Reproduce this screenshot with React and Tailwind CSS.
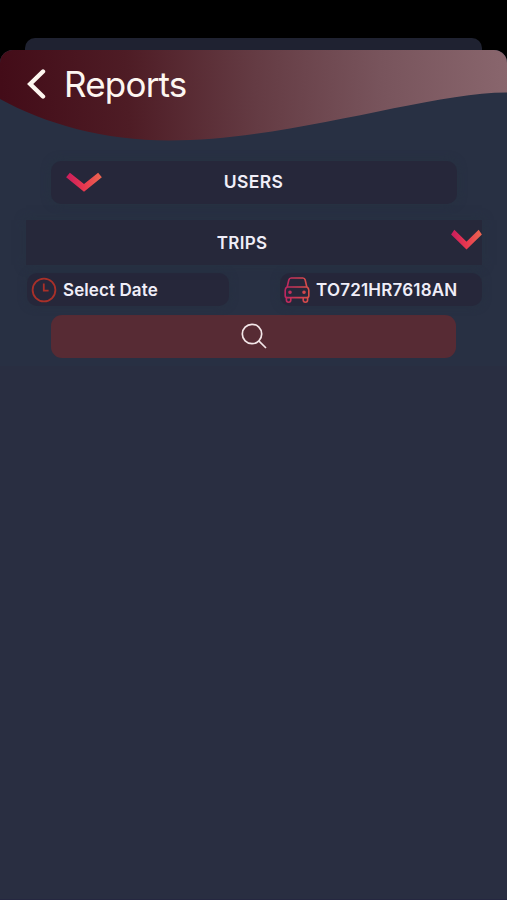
import React from 'react';

function ChevronDown({ id, width, height, className }) {
  return (
    <svg width={width} height={height} viewBox="0 0 36 20" preserveAspectRatio="none" fill="none" className={className}>
      <defs>
        <linearGradient id={id} x1="0" y1="0" x2="1" y2="0">
          <stop offset="0" stopColor="#cb1f5c" />
          <stop offset="0.5" stopColor="#e8384f" />
          <stop offset="1" stopColor="#ea6450" />
        </linearGradient>
      </defs>
      <path d="M2 3 L18 15.8 L34 3" stroke={`url(#${id})`} strokeWidth="6" />
    </svg>
  );
}

function ClockIcon() {
  return (
    <svg width="26" height="26" viewBox="0 0 26 26" fill="none" stroke="#a93029" strokeWidth="1.8" className="relative -top-px">
      <circle cx="13" cy="13" r="11.4" />
      <path d="M12.8 6.5 V13.6 H17.6" />
    </svg>
  );
}

function CarIcon() {
  return (
    <svg width="26" height="26" viewBox="0 0 26 26" fill="none" stroke="url(#car)" strokeWidth="1.6" strokeLinejoin="round" className="relative -top-px">
      <defs>
        <linearGradient id="car" gradientUnits="userSpaceOnUse" x1="1" y1="0" x2="25" y2="0">
          <stop offset="0" stopColor="#bd2560" />
          <stop offset="1" stopColor="#d95048" />
        </linearGradient>
      </defs>
      <path d="M3.2 10 L4.8 3 Q5.3 1 7.2 1 H18.8 Q20.7 1 21.2 3 L22.8 10" />
      <path d="M3.2 10 H22.8 Q24.8 11 24.8 13.2 V18.8 Q24.8 20.6 23 20.6 H3 Q1.2 20.6 1.2 18.8 V13.2 Q1.2 11 3.2 10 Z" />
      <path d="M2.4 20.6 V23 Q2.4 25.2 4.6 25.2 Q6.8 25.2 6.8 23 V20.6" />
      <path d="M19.2 20.6 V23 Q19.2 25.2 21.4 25.2 Q23.6 25.2 23.6 23 V20.6" />
      <circle cx="6" cy="15.2" r="1" fill="#c93454" />
      <circle cx="20" cy="15.2" r="1" fill="#d94a4a" />
    </svg>
  );
}

function Header() {
  return (
    <header className="relative h-[92px]">
      <svg className="absolute inset-0" width="507" height="92" viewBox="0 0 507 92">
        <defs>
          <linearGradient id="wave" gradientUnits="userSpaceOnUse" x1="0" y1="20" x2="507" y2="0">
            <stop offset="0" stopColor="#430c18" />
            <stop offset="0.25" stopColor="#4e1c25" />
            <stop offset="0.5" stopColor="#643b43" />
            <stop offset="0.75" stopColor="#78545c" />
            <stop offset="1" stopColor="#89666d" />
          </linearGradient>
        </defs>
        <path d="M0 0 H507 V42.5 C430 42 290 90.5 169 90.5 C105 90.5 45 74 0 49 Z" fill="url(#wave)" />
      </svg>
      <div className="relative flex items-center pt-[11px] pl-[27px]">
        <svg width="19" height="32" viewBox="0 0 19 32" fill="none" stroke="#fdf6ef" strokeWidth="4.4">
          <path d="M16 3.5 L3.2 16 L16 28.5" strokeLinecap="round" strokeLinejoin="miter" />
        </svg>
        <h1 className="mt-px ml-[18px] text-[35px] leading-[44px] tracking-[-0.8px] text-[#fdf6f0]">Reports</h1>
      </div>
    </header>
  );
}

export default function App() {
  return (
    <div className="flex h-[900px] w-[507px] flex-col overflow-hidden bg-black pt-[38px] font-['Inter',sans-serif] text-[17px] font-semibold text-[#f0eef8]">
      <div className="mx-[25px] h-3 shrink-0 rounded-t-[10px] bg-[#1f2231]" />
      <main className="flex-1 overflow-hidden rounded-t-[13px] border-b border-[#252740] bg-[#292e41]">
        <div className="h-[316px] bg-[#283043]">
          <div className="font-normal">
            <Header />
          </div>
          <button className="relative mx-auto mt-[19px] flex h-[43px] w-[406px] items-center justify-center rounded-[10px] bg-[#26273a] text-[17.5px] tracking-[0.4px] shadow-[0_0_10px_#263241]">
            <ChevronDown id="users" width={36} height={20} className="absolute top-[11px] left-[15px]" />
            USERS
          </button>
          <button className="relative mx-[26px] mt-4 flex h-[45px] w-[456px] items-center justify-center bg-[#26283a] pt-0.5 pr-6 tracking-[0.3px] shadow-[0_0_10px_#263241]">
            <ChevronDown id="trips" width={31} height={21} className="absolute top-[9px] right-0" />
            TRIPS
          </button>
          <div className="mt-[8px] flex justify-between pr-[25px] pl-[27px]">
            <button className="flex h-[33px] w-[202px] items-center gap-1.5 rounded-[10px] bg-[#26273a] pt-0.5 pl-1 tracking-[0.1px] shadow-[0_0_8px_#263040]">
              <ClockIcon />
              Select Date
            </button>
            <button className="flex h-[33px] w-[202px] items-center gap-1.5 rounded-[10px] bg-[#26273a] pt-0.5 pl-1 tracking-[0.2px] shadow-[0_0_8px_#263040]">
              <CarIcon />
              TO721HR7618AN
            </button>
          </div>
          <button className="mx-auto mt-[9px] flex h-[43px] w-[405px] items-center justify-center rounded-[11px] bg-[#572b34] pb-0.5">
            <svg width="26" height="26" viewBox="0 0 26 26" fill="none" stroke="#f3e6e8" strokeWidth="1.7">
              <circle cx="11" cy="11" r="9.7" />
              <path d="M17.8 17.8 L25 25" />
            </svg>
          </button>
        </div>
      </main>
    </div>
  );
}
